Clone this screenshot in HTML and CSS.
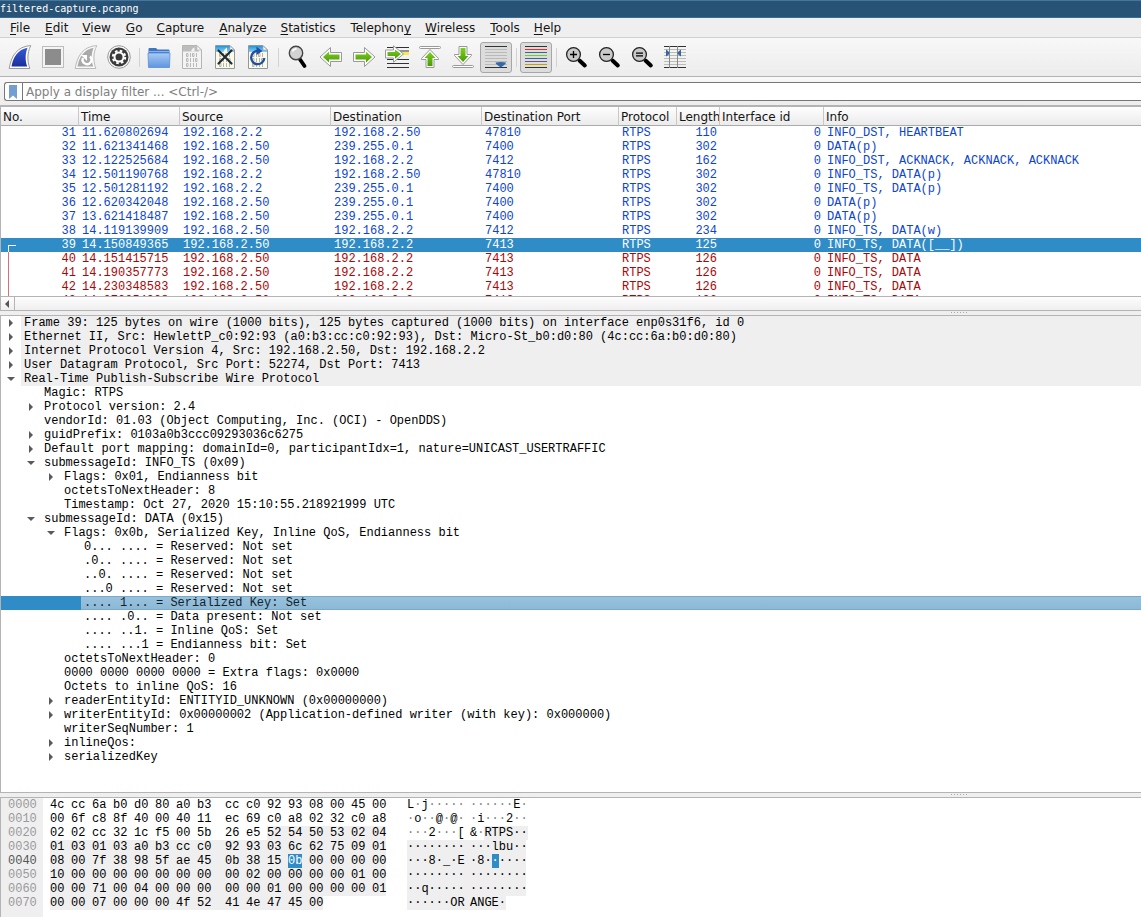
FILE: index.html
```html
<!DOCTYPE html>
<html lang="en">
<head>
<meta charset="utf-8">
<title>filtered-capture.pcapng</title>
<link rel="stylesheet" href="styles.css">
</head>
<body>
<svg class="defs" width="0" height="0" aria-hidden="true">
  <defs>
    <linearGradient id="blue" x1="0" y1="0" x2="0" y2="1"><stop offset="0" stop-color="#3558d8"/><stop offset="1" stop-color="#1b2f9c"/></linearGradient>
    <linearGradient id="green" x1="0" y1="0" x2="0" y2="1"><stop offset="0" stop-color="#7ccf22"/><stop offset="1" stop-color="#4c9a06"/></linearGradient>
    <linearGradient id="folder" x1="0" y1="0" x2="0" y2="1"><stop offset="0" stop-color="#a9cbf5"/><stop offset="1" stop-color="#5d95e0"/></linearGradient>
    <linearGradient id="sky" x1="0" y1="0" x2="0" y2="1"><stop offset="0" stop-color="#1e97dd"/><stop offset="1" stop-color="#8fd0f2"/></linearGradient>
    <g id="bits" fill="none" stroke-width="1">
      <path d="M6.500 8.500h1.500v3h-1.500ZM10.500 8v4M12.500 8.500h1.500v3h-1.500ZM16.500 8v4" />
      <path d="M6.500 13.500h1.500v3h-1.500ZM10.500 13v4M13.500 13v4M15.500 13.500h1.500v3h-1.500Z" />
      <path d="M6.500 18.500h1.500v3h-1.500ZM10.500 18v4M13.500 18v4M16.500 18v4" />
    </g>
    <path id="arrow" d="M1 12 11.500 2.500V7.500H22.500V16.500H11.500V21.500Z" stroke-linejoin="round"/>
    <g id="lens">
      <path d="M14.500 14.500 19.800 19.500" stroke="#000" stroke-width="4" stroke-linecap="round"/>
      <circle cx="8.500" cy="8.500" r="6.900" fill="#c9c9c9" stroke="#222" stroke-width="1.300"/>
    </g>
  </defs>
</svg>

<div class="window">
  <header class="titlebar">filtered-capture.pcapng</header>

  <nav class="menubar" aria-label="Main menu">
    <button type="button"><u>F</u>ile</button>
    <button type="button"><u>E</u>dit</button>
    <button type="button"><u>V</u>iew</button>
    <button type="button"><u>G</u>o</button>
    <button type="button"><u>C</u>apture</button>
    <button type="button"><u>A</u>nalyze</button>
    <button type="button"><u>S</u>tatistics</button>
    <button type="button">Telephon<u>y</u></button>
    <button type="button"><u>W</u>ireless</button>
    <button type="button"><u>T</u>ools</button>
    <button type="button"><u>H</u>elp</button>
  </nav>

  <div class="toolbar" role="toolbar" aria-label="Main toolbar">
    <button type="button" aria-label="Start capture"><svg viewBox="0 0 24 24"><path d="M1.200 23.500C3 11.500 9 1.200 22.800.6 19 8 19.200 16 21.800 23.500Z" fill="#fff" stroke="#999"/><path d="M3.500 21.600C5.200 12 10 4.500 19.600 2.800 17 9 17.200 15.500 19.200 21.600Z" fill="url(#blue)"/></svg></button>
    <button type="button" aria-label="Stop capture"><svg viewBox="0 0 24 24"><rect x="1.500" y="1.500" width="21" height="21" fill="#f4f4f4" stroke="#bdbdbd"/><rect x="4" y="4" width="16" height="16" fill="#8c8c8c"/></svg></button>
    <button type="button" aria-label="Restart capture"><svg viewBox="0 0 24 24"><path d="M1.200 23.500C3 11.500 9 1.200 22.800.6 19 8 19.200 16 21.800 23.500Z" fill="#f8f8f8" stroke="#bbb"/><path d="M3.500 21.600C5.200 12 10 4.500 19.600 2.800 17 9 17.200 15.500 19.200 21.600Z" fill="#a9a9a9"/><path d="M16 11.500A4.400 4.400 0 1 1 9 13" fill="none" stroke="#fff" stroke-width="2.400"/><path d="M7 10h6v6Z" fill="#fff"/></svg></button>
    <button type="button" aria-label="Capture options"><svg viewBox="0 0 24 24"><circle cx="12" cy="12" r="11.300" fill="#f8f8f8" stroke="#999"/><circle cx="12" cy="12" r="9.500" fill="#3a3a3a"/><circle cx="12" cy="12" r="6.200" fill="none" stroke="#fff" stroke-width="2" stroke-dasharray="2.600 2.270"/><circle cx="12" cy="12" r="4.500" fill="none" stroke="#fff" stroke-width="2"/></svg></button>
    <span class="sep"></span>
    <button type="button" aria-label="Open"><svg viewBox="0 0 24 24"><path d="M1.500 8V4q0-1 1-1h6.500l1.500 1.500H21.500q1 0 1 1V8Z" fill="#3f76c4"/><path d="M1.500 6.500H22.500" stroke="#8db4ea"/><path d="M1 8H23L22.500 22.500H1.500Z" fill="url(#folder)" stroke="#5b8dd6" stroke-width=".8"/></svg></button>
    <button type="button" aria-label="Save"><svg viewBox="0 0 24 24"><path d="M2.500.5H17L21.500 5V23.500H2.500Z" fill="#f3f3f3" stroke="#b5b5b5"/><path d="M3 1H16.500L19 6.500H3Z" fill="#bdbdbd"/><path d="M11 6.500Q12 3 14.500 2.500V6.500Z" fill="#f3f3f3"/><path d="M17 .8V5h4.200Z" fill="#fff" stroke="#b5b5b5" stroke-width=".7"/><use href="#bits" stroke="#b8b8b8"/></svg></button>
    <button type="button" aria-label="Close"><svg viewBox="0 0 24 24"><path d="M2.500.5H17L21.500 5V23.500H2.500Z" fill="#fcfbe9" stroke="#8f9a9f"/><path d="M3 1H16.500L21 5.500V7H3Z" fill="url(#sky)"/><path d="M10.500 7Q11.500 3.500 14 2.500V7Z" fill="#fff"/><path d="M17 .8V5h4.200Z" fill="#fff" stroke="#99a" stroke-width=".7"/><use href="#bits" stroke="#b4b4ac"/><path d="M5.500 5.500 18.500 18.500M18.500 5.500 5.500 18.500" stroke="#222b31" stroke-width="2.200" stroke-linecap="round"/></svg></button>
    <button type="button" aria-label="Reload"><svg viewBox="0 0 24 24"><path d="M2.500.5H17L21.500 5V23.500H2.500Z" fill="#fcfbe9" stroke="#8f9a9f"/><path d="M3 1H16.500L21 5.500V7H3Z" fill="url(#sky)"/><path d="M17 .8V5h4.200Z" fill="#fff" stroke="#99a" stroke-width=".7"/><use href="#bits" stroke="#b4b4ac"/><path d="M18.300 13A6.600 6.600 0 1 1 11.700 6" fill="none" stroke="#1e4fa0" stroke-width="2.300"/><path d="M10.500 1.800 16.500 6 10.500 10Z" fill="#1e4fa0"/></svg></button>
    <span class="sep"></span>
    <button type="button" aria-label="Find packet"><svg viewBox="0 0 24 24"><path d="M13 13 18.500 21" stroke="#000" stroke-width="3.800" stroke-linecap="round"/><circle cx="10" cy="8" r="6.700" fill="#d2d2d2" stroke="#444" stroke-width="1.400"/><path d="M6.500 6.500Q7.500 4 10.500 3.800" fill="none" stroke="#fff" stroke-width="1.400"/></svg></button>
    <button type="button" aria-label="Previous packet"><svg viewBox="0 0 24 24"><use href="#arrow" fill="#fff" stroke="#999"/><path d="M4 12 10 6.500V9.500H20.500V14.500H10V17.500Z" fill="url(#green)"/></svg></button>
    <button type="button" aria-label="Next packet"><svg viewBox="0 0 24 24"><g transform="rotate(180 12 12)"><use href="#arrow" fill="#fff" stroke="#999"/></g><path d="M20 12 14 6.500V9.500H3.500V14.500H14V17.500Z" fill="url(#green)"/></svg></button>
    <button type="button" aria-label="Go to packet"><svg viewBox="0 0 24 24"><path d="M2 2.500H24M2 6H24M2 14.500H24M2 18.500H24M2 22.500H24" stroke="#2e3436" stroke-width="1.200"/><path d="M15 8.500H24" stroke="#fce94f" stroke-width="3"/><path d="M.5 5H8.500V.8L18.500 9 8.500 17.200V13H.5Z" fill="#fff" stroke="#999"/><path d="M2.500 7H10V4.500L16 9 10 13.800V11H2.500Z" fill="url(#green)"/></svg></button>
    <button type="button" aria-label="First packet"><svg viewBox="0 0 24 24"><rect x="1.500" y="1.500" width="21" height="2" rx="1" fill="#fff" stroke="#999"/><path d="M12 4.500 20.500 13.500V14.500H16V22.500H8V14.500H3.500V13.500Z" fill="#fff" stroke="#999"/><path d="M12 7 17.500 13H14.500V21H9.500V13H6.500Z" fill="url(#green)"/></svg></button>
    <button type="button" aria-label="Last packet"><svg viewBox="0 0 24 24"><rect x="1.500" y="20.500" width="21" height="2" rx="1" fill="#fff" stroke="#999"/><path d="M12 19.500 20.500 10.500V9.500H16V1.500H8V9.500H3.500V10.500Z" fill="#fff" stroke="#999"/><path d="M12 17 17.500 11H14.500V3H9.500V11H6.500Z" fill="url(#green)"/></svg></button>
    <button type="button" class="checked" aria-pressed="true" aria-label="Auto scroll"><svg viewBox="0 0 24 24"><path d="M1 1.500H23M1 22.500H23" stroke="#2e3436"/><path d="M1 4.500H23M1 7.500H23M1 10.500H23M1 13.500H23M1 16.500H23M1 19.500H23" stroke="#b8bbb5"/><path d="M11.500 17.500Q17 16.500 22 17.500 22 19 19.500 20.500L16.800 22.500 14 20.500Q11.500 19 11.500 17.500Z" fill="#3468a8"/></svg></button>
    <span class="sep"></span>
    <button type="button" class="checked" aria-pressed="true" aria-label="Colorize packets"><svg viewBox="0 0 24 24"><path d="M1 1.500H23M1 22.500H23" stroke="#2e3436"/><path d="M1 4.500H23" stroke="#ef2929"/><path d="M1 7.500H23M1 13.500H23" stroke="#3465a4"/><path d="M1 10.500H23" stroke="#73d216"/><path d="M1 16.500H23" stroke="#75507b"/><path d="M1 19.500H23" stroke="#c4a000"/></svg></button>
    <span class="sep"></span>
    <button type="button" aria-label="Zoom in"><svg viewBox="0 0 24 24"><g transform="translate(1 1)"><use href="#lens"/><path d="M5 8.500h7M8.500 5v7" stroke="#000" stroke-width="1.300"/></g></svg></button>
    <button type="button" aria-label="Zoom out"><svg viewBox="0 0 24 24"><g transform="translate(1 1)"><use href="#lens"/><path d="M5 8.500h7" stroke="#000" stroke-width="1.300"/></g></svg></button>
    <button type="button" aria-label="Normal size"><svg viewBox="0 0 24 24"><g transform="translate(1 1)"><use href="#lens"/><path d="M5 7.200h7M5 9.800h7" stroke="#000" stroke-width="1.200"/></g></svg></button>
    <button type="button" aria-label="Resize columns"><svg viewBox="0 0 24 24"><path d="M1 4.500H23M1 7.500H23M1 10.500H23M1 13.500H23M1 16.500H23M1 19.500H23" stroke="#babdb6"/><path d="M1 1.500H23M1 22.500H23" stroke="#2e3436"/><path d="M6.500 1V23M14.500 1V23" stroke="#888a85"/><path d="M3 4.500Q6 6 6.500 8 6 10 3 11.500ZM18 4.500Q15.200 6 14.500 8 15.200 10 18 11.500Z" fill="#3465a4"/></svg></button>
  </div>

  <div class="filterbar">
    <div class="filterbox">
      <button type="button" class="bookmark" aria-label="Filter bookmarks"><svg viewBox="0 0 8 14"><path d="M0 0H8V14L4 10.500 0 14Z" fill="#729fcf"/></svg></button>
      <input type="text" aria-label="Display filter" placeholder="Apply a display filter ... &lt;Ctrl-/&gt;">
    </div>
  </div>

  <section class="packets" aria-label="Packet list">
    <div class="packets-view">
      <table class="plist">
        <colgroup><col class="c-no"><col class="c-time"><col class="c-addr"><col class="c-addr"><col class="c-port"><col class="c-proto"><col class="c-len"><col class="c-if"><col></colgroup>
        <thead><tr><th>No.</th><th>Time</th><th>Source</th><th>Destination</th><th>Destination Port</th><th>Protocol</th><th>Length</th><th>Interface id</th><th>Info</th></tr></thead>
        <tbody>
          <tr><td>31</td><td>11.620802694</td><td>192.168.2.2</td><td>192.168.2.50</td><td>47810</td><td>RTPS</td><td>110</td><td>0</td><td>INFO_DST, HEARTBEAT</td></tr>
          <tr><td>32</td><td>11.621341468</td><td>192.168.2.50</td><td>239.255.0.1</td><td>7400</td><td>RTPS</td><td>302</td><td>0</td><td>DATA(p)</td></tr>
          <tr><td>33</td><td>12.122525684</td><td>192.168.2.50</td><td>192.168.2.2</td><td>7412</td><td>RTPS</td><td>162</td><td>0</td><td>INFO_DST, ACKNACK, ACKNACK, ACKNACK</td></tr>
          <tr><td>34</td><td>12.501190768</td><td>192.168.2.2</td><td>192.168.2.50</td><td>47810</td><td>RTPS</td><td>302</td><td>0</td><td>INFO_TS, DATA(p)</td></tr>
          <tr><td>35</td><td>12.501281192</td><td>192.168.2.2</td><td>239.255.0.1</td><td>7400</td><td>RTPS</td><td>302</td><td>0</td><td>INFO_TS, DATA(p)</td></tr>
          <tr><td>36</td><td>12.620342048</td><td>192.168.2.50</td><td>239.255.0.1</td><td>7400</td><td>RTPS</td><td>302</td><td>0</td><td>DATA(p)</td></tr>
          <tr><td>37</td><td>13.621418487</td><td>192.168.2.50</td><td>239.255.0.1</td><td>7400</td><td>RTPS</td><td>302</td><td>0</td><td>DATA(p)</td></tr>
          <tr><td>38</td><td>14.119139909</td><td>192.168.2.50</td><td>192.168.2.2</td><td>7412</td><td>RTPS</td><td>234</td><td>0</td><td>INFO_TS, DATA(w)</td></tr>
          <tr class="selected"><td>39</td><td>14.150849365</td><td>192.168.2.50</td><td>192.168.2.2</td><td>7413</td><td>RTPS</td><td>125</td><td>0</td><td>INFO_TS, DATA([__])</td></tr>
          <tr class="related"><td>40</td><td>14.151415715</td><td>192.168.2.50</td><td>192.168.2.2</td><td>7413</td><td>RTPS</td><td>126</td><td>0</td><td>INFO_TS, DATA</td></tr>
          <tr class="related"><td>41</td><td>14.190357773</td><td>192.168.2.50</td><td>192.168.2.2</td><td>7413</td><td>RTPS</td><td>126</td><td>0</td><td>INFO_TS, DATA</td></tr>
          <tr class="related"><td>42</td><td>14.230348583</td><td>192.168.2.50</td><td>192.168.2.2</td><td>7413</td><td>RTPS</td><td>126</td><td>0</td><td>INFO_TS, DATA</td></tr>
          <tr class="related"><td>43</td><td>14.270354908</td><td>192.168.2.50</td><td>192.168.2.2</td><td>7413</td><td>RTPS</td><td>126</td><td>0</td><td>INFO_TS, DATA</td></tr>
        </tbody>
      </table>
    </div>
    <div class="scrollbar"><button type="button" aria-label="Scroll left"><svg viewBox="0 0 4 8"><path d="M4 0V8L0 4Z" fill="#555"/></svg></button></div>
  </section>

  <div class="splitter"><i></i><i></i><i></i><i></i><i></i><i></i></div>

  <section class="details" aria-label="Packet details">
    <ul class="tree">
      <li class="top"><button type="button" class="closed" aria-label="Expand"></button><span>Frame 39: 125 bytes on wire (1000 bits), 125 bytes captured (1000 bits) on interface enp0s31f6, id 0</span></li>
      <li class="top"><button type="button" class="closed" aria-label="Expand"></button><span>Ethernet II, Src: HewlettP_c0:92:93 (a0:b3:cc:c0:92:93), Dst: Micro-St_b0:d0:80 (4c:cc:6a:b0:d0:80)</span></li>
      <li class="top"><button type="button" class="closed" aria-label="Expand"></button><span>Internet Protocol Version 4, Src: 192.168.2.50, Dst: 192.168.2.2</span></li>
      <li class="top"><button type="button" class="closed" aria-label="Expand"></button><span>User Datagram Protocol, Src Port: 52274, Dst Port: 7413</span></li>
      <li class="top"><button type="button" class="open" aria-label="Collapse"></button><span>Real-Time Publish-Subscribe Wire Protocol</span></li>
      <li class="l1 leaf"><span>Magic: RTPS</span></li>
      <li class="l1"><button type="button" class="closed" aria-label="Expand"></button><span>Protocol version: 2.4</span></li>
      <li class="l1 leaf"><span>vendorId: 01.03 (Object Computing, Inc. (OCI) - OpenDDS)</span></li>
      <li class="l1"><button type="button" class="closed" aria-label="Expand"></button><span>guidPrefix: 0103a0b3ccc09293036c6275</span></li>
      <li class="l1"><button type="button" class="closed" aria-label="Expand"></button><span>Default port mapping: domainId=0, participantIdx=1, nature=UNICAST_USERTRAFFIC</span></li>
      <li class="l1"><button type="button" class="open" aria-label="Collapse"></button><span>submessageId: INFO_TS (0x09)</span></li>
      <li class="l2"><button type="button" class="closed" aria-label="Expand"></button><span>Flags: 0x01, Endianness bit</span></li>
      <li class="l2 leaf"><span>octetsToNextHeader: 8</span></li>
      <li class="l2 leaf"><span>Timestamp: Oct 27, 2020 15:10:55.218921999 UTC</span></li>
      <li class="l1"><button type="button" class="open" aria-label="Collapse"></button><span>submessageId: DATA (0x15)</span></li>
      <li class="l2"><button type="button" class="open" aria-label="Collapse"></button><span>Flags: 0x0b, Serialized Key, Inline QoS, Endianness bit</span></li>
      <li class="l3 leaf"><span>0... .... = Reserved: Not set</span></li>
      <li class="l3 leaf"><span>.0.. .... = Reserved: Not set</span></li>
      <li class="l3 leaf"><span>..0. .... = Reserved: Not set</span></li>
      <li class="l3 leaf"><span>...0 .... = Reserved: Not set</span></li>
      <li class="l3 leaf current"><span>.... 1... = Serialized Key: Set</span></li>
      <li class="l3 leaf"><span>.... .0.. = Data present: Not set</span></li>
      <li class="l3 leaf"><span>.... ..1. = Inline QoS: Set</span></li>
      <li class="l3 leaf"><span>.... ...1 = Endianness bit: Set</span></li>
      <li class="l2 leaf"><span>octetsToNextHeader: 0</span></li>
      <li class="l2 leaf"><span>0000 0000 0000 0000 = Extra flags: 0x0000</span></li>
      <li class="l2 leaf"><span>Octets to inline QoS: 16</span></li>
      <li class="l2"><button type="button" class="closed" aria-label="Expand"></button><span>readerEntityId: ENTITYID_UNKNOWN (0x00000000)</span></li>
      <li class="l2"><button type="button" class="closed" aria-label="Expand"></button><span>writerEntityId: 0x00000002 (Application-defined writer (with key): 0x000000)</span></li>
      <li class="l2 leaf"><span>writerSeqNumber: 1</span></li>
      <li class="l2"><button type="button" class="closed" aria-label="Expand"></button><span>inlineQos:</span></li>
      <li class="l2"><button type="button" class="closed" aria-label="Expand"></button><span>serializedKey</span></li>
    </ul>
  </section>

  <div class="splitter"><i></i><i></i><i></i><i></i><i></i><i></i></div>

  <section class="bytes" aria-label="Packet bytes">
    <table class="hex">
      <colgroup><col class="h-off"><col class="h-b" span="7"><col class="h-mid"><col class="h-b" span="7"><col class="h-end"><col class="h-a1"><col class="h-a2"></colgroup>
      <tbody>
        <tr><th scope="row">0000</th><td>4c<td>cc<td>6a<td>b0<td>d0<td>80<td>a0<td>b3<td>cc<td>c0<td>92<td>93<td>08<td>00<td>45<td>00<td>L<s>·</s>j<s>·····</s><td><s>······</s>E<s>·</s></tr>
        <tr><th scope="row">0010</th><td>00<td>6f<td>c8<td>8f<td>40<td>00<td>40<td>11<td>ec<td>69<td>c0<td>a8<td>02<td>32<td>c0<td>a8<td><s>·</s>o<s>··</s>@<s>·</s>@<s>·</s><td><s>·</s>i<s>···</s>2<s>··</s></tr>
        <tr><th scope="row">0020</th><td>02<td>02<td>cc<td>32<td>1c<td>f5<td>00<td>5b<td>26<td>e5<td class="f">52<td class="f">54<td class="f">50<td class="f">53<td class="f">02<td class="f">04<td><s>···</s>2<s>···</s>[<td>&amp;<s>·</s><span class="f">RTPS··</span></tr>
        <tr class="field"><th scope="row">0030</th><td>01<td>03<td>01<td>03<td>a0<td>b3<td>cc<td>c0<td>92<td>93<td>03<td>6c<td>62<td>75<td>09<td>01<td>········<td>···lbu··</tr>
        <tr class="field"><th scope="row" class="here">0040</th><td>08<td>00<td>7f<td>38<td>98<td>5f<td>ae<td>45<td>0b<td>38<td>15<td><mark>0b</mark><td>00<td>00<td>00<td>00<td>···8·_·E<td>·8·<mark>·</mark>····</tr>
        <tr class="field"><th scope="row">0050</th><td>10<td>00<td>00<td>00<td>00<td>00<td>00<td>00<td>00<td>02<td>00<td>00<td>00<td>00<td>01<td>00<td>········<td>········</tr>
        <tr class="field"><th scope="row">0060</th><td>00<td>00<td>71<td>00<td>04<td>00<td>00<td>00<td>00<td>00<td>01<td>00<td>00<td>00<td>00<td>01<td>··q·····<td>········</tr>
        <tr class="field last"><th scope="row">0070</th><td>00<td>00<td>07<td>00<td>00<td>00<td>4f<td>52<td>41<td>4e<td>47<td>45<td class="n"><span class="f">00</span><td class="n"><td class="n"><td class="n"><td>······OR<td class="n"><span class="f">ANGE·</span></tr>
      </tbody>
    </table>
  </section>
</div>
</body>
</html>
```

FILE: styles.css
```css
* { box-sizing: border-box; }

body {
  margin: 0;
  background: #efefef;
  color: #141414;
  font: 12px/14px "DejaVu Sans", sans-serif;
}

button {
  margin: 0;
  padding: 0;
  border: 0;
  background: none;
  color: inherit;
  font: inherit;
}

svg { display: block; }
.defs { position: absolute; }

.window {
  display: flex;
  flex-direction: column;
  height: 100vh;
  overflow: hidden;
}

.window > * { flex: none; }

/* Title and menu */

.titlebar {
  height: 18px;
  border-top: 1px solid #45779c;
  border-bottom: 1px solid #3c6c90;
  background: #285377;
  color: #fff;
  font: 10px/16px "DejaVu Sans Mono", monospace;
}

.menubar {
  display: flex;
  height: 20px;
  padding: 0 3px;
  border-bottom: 1px solid #d0d0d0;
}

.menubar button {
  height: 19px;
  padding: 1px 7px 0;
  line-height: 18px;
}

.menubar button:nth-child(even) { margin-left: 1px; }

.menubar u { text-underline-offset: 2px; }

/* Toolbar */

.toolbar {
  display: flex;
  padding: 4px 4px 3px;
  border-bottom: 1px solid #b4b4b4;
  background: linear-gradient(#f8f8f8, #ececec);
}

.toolbar button {
  flex: none;
  width: 32px;
  height: 31px;
  margin-right: 1px;
  padding: 2px 3px 3px;
  border: 1px solid transparent;
  border-radius: 3px;
}

.toolbar .checked {
  border-color: #a6a6a6;
  background: #dcdcdc;
}

.toolbar svg {
  width: 24px;
  height: 24px;
}

.sep {
  width: 7px;
  margin: 6px 0;
  background: linear-gradient(#d2d2d2, #d2d2d2) 3px 0 / 1px 100% no-repeat;
}

/* Display filter */

.filterbar {
  height: 28px;
  padding: 5px 0 0 4px;
  background: linear-gradient(#f8f8f8, #ededed);
}

.filterbox {
  display: flex;
  height: 19px;
  border: 1px solid #777;
  border-right: 0;
  border-radius: 3px 0 0 3px;
  background: #fff;
}

.bookmark {
  width: 18px;
  padding: 0 5px 0 4px;
  border-right: 1px solid #777;
}

.bookmark svg {
  width: 8px;
  height: 14px;
}

.filterbox input {
  flex: 1;
  min-width: 0;
  padding: 0 3px;
  border: 0;
  outline: 0;
  background: none;
  font: inherit;
}

.filterbox input::placeholder {
  color: #808080;
  opacity: 1;
}

/* Packet list */

.packets {
  border-top: 2px solid #b4b4b4;
  border-bottom: 1px solid #b4b4b4;
  border-left: 1px solid #b4b4b4;
  background: #fff;
}

.packets-view {
  height: 189px;
  overflow: hidden;
}

.plist {
  width: 100%;
  border-collapse: separate;
  border-spacing: 0;
  table-layout: fixed;
}

.c-no { width: 78px; }
.c-time { width: 101px; }
.c-addr { width: 151px; }
.c-port { width: 137px; }
.c-proto { width: 58px; }
.c-len { width: 43px; }
.c-if { width: 104px; }

.plist th {
  height: 19px;
  padding: 2px 0 0 2px;
  overflow: hidden;
  border-right: 1px solid #c8c8c8;
  border-bottom: 1px solid #ababab;
  background: linear-gradient(#fefefe, #ebebeb);
  font-weight: normal;
  line-height: 16px;
  text-align: left;
  white-space: nowrap;
}

.plist th:last-child { border-right: 0; }

.plist td {
  height: 14px;
  padding: 0 3px;
  overflow: hidden;
  color: #0d45d0;
  font: 12px/14px "Liberation Mono", monospace;
  white-space: nowrap;
}

.plist td:nth-child(1),
.plist td:nth-child(7),
.plist td:nth-child(8) { text-align: right; }

.plist .related td { color: #ac0505; }

.plist .selected td {
  background: #308cc6;
  color: #fff;
}

/* Conversation bracket in the first column */
.selected td:first-child,
.related td:first-child { position: relative; }

.selected td:first-child::before,
.related td:first-child::before {
  content: "";
  position: absolute;
  top: 0;
  bottom: 0;
  left: 7px;
  border-left: 1px solid #d4707a;
}

.selected td:first-child::before {
  top: 7px;
  width: 7px;
  border-top: 1px solid #fff;
  border-left-color: #fff;
}

.scrollbar {
  height: 14px;
  border-top: 1px solid #b4b4b4;
  background: linear-gradient(#fdfdfd, #efefef);
}

.scrollbar button {
  display: flex;
  align-items: center;
  justify-content: center;
  width: 14px;
  height: 13px;
  padding-right: 1px;
  border-right: 1px solid #b4b4b4;
}

.scrollbar svg {
  width: 4px;
  height: 8px;
}

.splitter {
  display: flex;
  justify-content: flex-end;
  gap: 2px;
  height: 4px;
  padding: 1px 174px 0 0;
}

.splitter i {
  width: 1px;
  height: 1px;
  background: #a8a8a8;
}

/* Packet details */

.window > .details {
  flex: 1;
  min-height: 0;
  overflow: hidden;
  border: 1px solid #b4b4b4;
  border-right: 0;
  background: #fff;
}

.tree {
  margin: 0;
  padding: 0;
  color: #000;
  font: 12px/14px "Liberation Mono", monospace;
  list-style: none;
}

.tree li { display: flex; }
.tree .l1 { padding-left: 20px; }
.tree .l2 { padding-left: 40px; }
.tree .l3 { padding-left: 60px; }

.tree button {
  display: flex;
  align-items: center;
  justify-content: center;
  width: 20px;
  height: 14px;
}

.tree button::before {
  content: "";
  background: #5a5a5a;
}

.tree .closed::before {
  width: 4px;
  height: 8px;
  clip-path: polygon(0 0, 100% 50%, 0 100%);
}

.tree .open::before {
  width: 8px;
  height: 4px;
  clip-path: polygon(0 0, 100% 0, 50% 100%);
}

.tree span {
  flex: 1;
  height: 14px;
  padding-left: 3px;
  white-space: pre;
}

.tree .leaf span { margin-left: 20px; }
.tree .top span { background: #efefef; }
.tree .current { background: #308cc6; }

.tree .current span {
  background: linear-gradient(#98c3df, #8cb8d5);
  box-shadow: inset 0 1px #7aaac8, inset 0 -1px #7aaac8;
  color: #14222c;
}

/* Packet bytes */

.bytes {
  height: 120px;
  overflow: hidden;
  border-top: 1px solid #b4b4b4;
  border-left: 1px solid #b4b4b4;
  background: linear-gradient(#efefef, #efefef) 0 0 / 42px 100% no-repeat #fff;
}

.hex {
  width: 525px;
  border-collapse: collapse;
  table-layout: fixed;
  color: #000;
  font: 12px/14px "Liberation Mono", monospace;
}

.h-off { width: 49px; }
.h-b { width: 21px; }
.h-mid { width: 28px; }
.h-end { width: 35px; }
.h-a1 { width: 63px; }
.h-a2 { width: 56px; }

.hex th,
.hex td {
  height: 14px;
  padding: 0;
  font-weight: normal;
  text-align: left;
  white-space: nowrap;
}

.hex th {
  padding-left: 7px;
  color: #9a9a9a;
}

.hex .here { color: #555; }

.hex s {
  color: #808080;
  text-decoration: none;
}

.hex .f,
.hex .field td { background: #efefef; }

.hex .field .n { background: none; }

/* The sixteenth byte is followed by the gap before the text column */
.hex td:nth-child(17) { background-clip: content-box; padding-right: 21px; }

.hex mark {
  background: #308cc6;
  color: #fff;
}
```
